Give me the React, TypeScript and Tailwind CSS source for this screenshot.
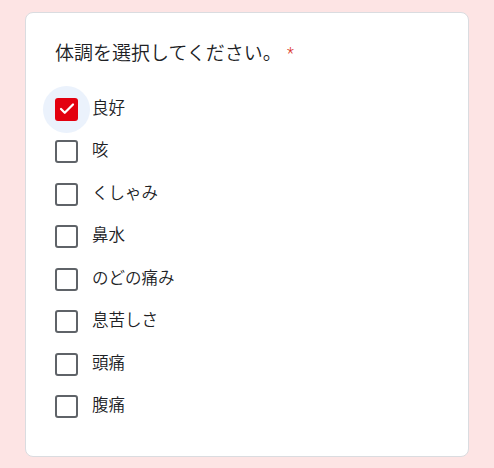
import { Check } from 'lucide-react';

const ITEMS = ['良好', '咳', 'くしゃみ', '鼻水', 'のどの痛み', '息苦しさ', '頭痛', '腹痛'];

export default function App() {
  const checked = ['良好'];
  return (
    <div
      className="min-h-screen bg-[#fde4e4] px-[25px] pt-[12px] pb-[12px]"
      style={{ fontFamily: 'Roboto, "Noto Sans CJK JP", sans-serif' }}
    >
      <div className="rounded-[8px] border border-[#dadce0] bg-white pt-[29px] pb-[28px] pl-[29px] pr-6">
        <div className="flex h-[24px] items-center text-[19px] leading-[24px] font-[350] text-[#202124]">
          <span>体調を選択してください。</span>
          <span className="ml-[5px] text-[16px] text-[#d93025]">*</span>
        </div>
        <div className="mt-[22px] flex flex-col">
          {ITEMS.map((label) => {
            const on = checked.includes(label);
            return (
              <label key={label} className="flex h-[42.5px] items-center">
                <span className="relative flex h-[23px] w-[23px] shrink-0 items-center justify-center">
                  {on && <span className="absolute -left-[12px] -top-[12px] h-[47px] w-[47px] rounded-full bg-[#ebf2fc]" />}
                  <span
                    className={
                      on
                        ? 'relative flex h-[23px] w-[23px] items-center justify-center rounded-[3px] bg-[#e3000f]'
                        : 'relative h-[23px] w-[23px] rounded-[3px] border-2 border-[#5f6368]'
                    }
                  >
                    {on && <Check className="h-[18px] w-[18px] text-white" strokeWidth={3} />}
                  </span>
                </span>
                <span className="ml-[14px] text-[16.5px] font-[350] text-[#202124]">{label}</span>
              </label>
            );
          })}
        </div>
      </div>
    </div>
  );
}
